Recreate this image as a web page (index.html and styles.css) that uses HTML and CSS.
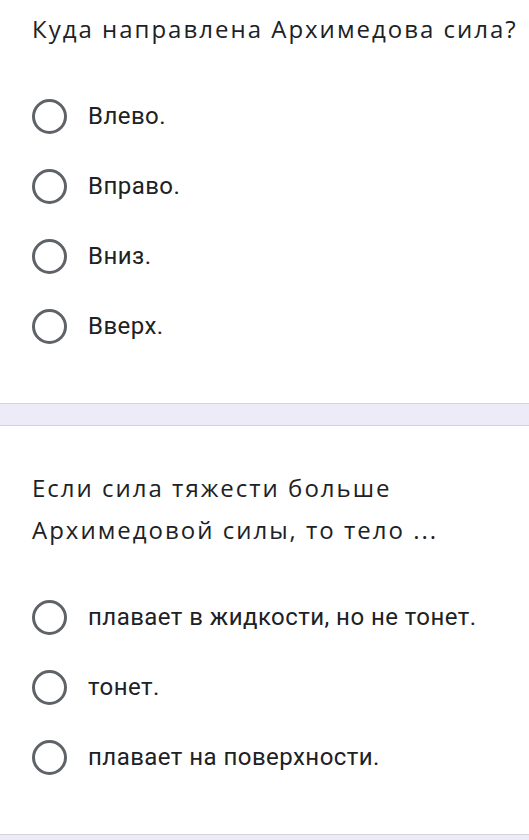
FILE: index.html
```html
<!DOCTYPE html>
<html lang="ru">
<head>
<meta charset="utf-8">
<link rel="stylesheet" href="styles.css">
</head>
<body>
<section class="card first">
  <h2 class="question">Куда направлена Архимедова сила?</h2>
  <ul class="options">
    <li class="option"><span class="radio"></span><span class="label">Влево.</span></li>
    <li class="option"><span class="radio"></span><span class="label">Вправо.</span></li>
    <li class="option"><span class="radio"></span><span class="label">Вниз.</span></li>
    <li class="option"><span class="radio"></span><span class="label">Вверх.</span></li>
  </ul>
</section>
<div class="divider"></div>
<section class="card second">
  <h2 class="question">Если сила тяжести больше Архимедовой силы, то тело ...</h2>
  <ul class="options">
    <li class="option"><span class="radio"></span><span class="label">плавает в жидкости, но не тонет.</span></li>
    <li class="option"><span class="radio"></span><span class="label">тонет.</span></li>
    <li class="option"><span class="radio"></span><span class="label">плавает на поверхности.</span></li>
  </ul>
</section>
<div class="divider"></div>
</body>
</html>
```
FILE: styles.css
```css
html, body {
  margin: 0;
  padding: 0;
  background: #ffffff;
}
body {
  width: 529px;
  overflow: hidden;
}
.card {
  padding: 0 10px 42px 32px;
  background: #fff;
}
.first {
  padding-top: 8px;
}
.second {
  padding-top: 41px;
}
.question {
  margin: 0 0 31px 0;
  font-family: "Open Sans", sans-serif;
  font-weight: 400;
  font-size: 24px;
  line-height: 42px;
  color: #202124;
  letter-spacing: 2px;
}
.options {
  list-style: none;
  margin: 0;
  padding: 0;
}
.option {
  display: flex;
  align-items: center;
  height: 70px;
}
.radio {
  width: 35px;
  height: 35px;
  box-sizing: border-box;
  border: 3px solid #5f6368;
  border-radius: 50%;
  flex: none;
}
.label {
  margin-left: 21px;
  font-family: Roboto, sans-serif;
  font-size: 24px;
  letter-spacing: 0.45px;
  color: #202124;
}
.divider {
  height: 21px;
  background: #eeebf8;
  border-top: 1px solid #d6d3de;
  border-bottom: 1px solid #d6d3de;
}
```
